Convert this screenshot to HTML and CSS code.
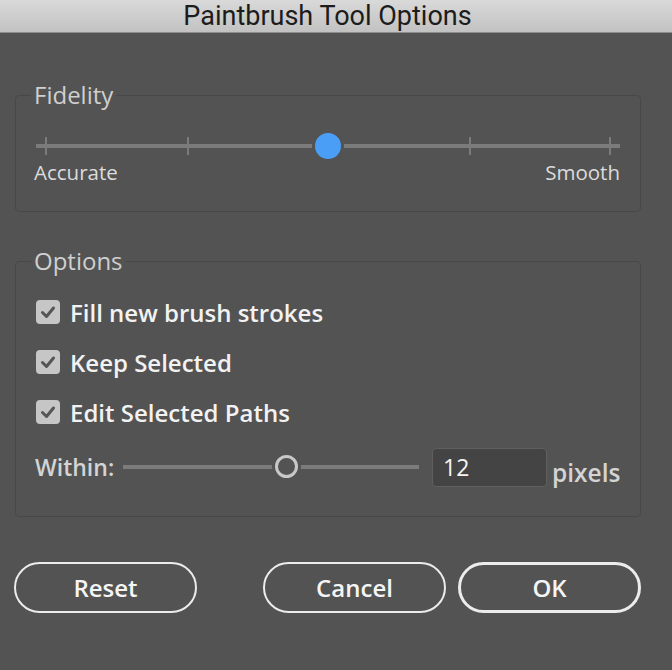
FILE: index.html
```html
<!DOCTYPE html>
<html>
<head>
<meta charset="utf-8">
<link rel="stylesheet" href="styles.css">
</head>
<body>
<div class="dialog">
  <div class="titlebar">Paintbrush Tool Options</div>
  <div class="content">
    <fieldset class="group fidelity">
      <legend>Fidelity</legend>
      <div class="fslider">
        <div class="track"></div>
        <span class="tick t0"></span>
        <span class="tick t1"></span>
        <span class="tick t2"></span>
        <span class="tick t3"></span>
        <span class="tick t4"></span>
        <span class="thumb-blue"></span>
      </div>
      <div class="fl-labels"><span>Accurate</span><span>Smooth</span></div>
    </fieldset>

    <fieldset class="group options">
      <legend>Options</legend>
      <label class="row"><span class="check"><svg viewBox="0 0 24 24" width="24" height="24"><path d="M6.5 12.5 L10.5 16.5 L17.5 8" fill="none" stroke="#555" stroke-width="3" stroke-linecap="round" stroke-linejoin="round"/></svg></span>Fill new brush strokes</label>
      <label class="row"><span class="check"><svg viewBox="0 0 24 24" width="24" height="24"><path d="M6.5 12.5 L10.5 16.5 L17.5 8" fill="none" stroke="#555" stroke-width="3" stroke-linecap="round" stroke-linejoin="round"/></svg></span>Keep Selected</label>
      <label class="row"><span class="check"><svg viewBox="0 0 24 24" width="24" height="24"><path d="M6.5 12.5 L10.5 16.5 L17.5 8" fill="none" stroke="#555" stroke-width="3" stroke-linecap="round" stroke-linejoin="round"/></svg></span>Edit Selected Paths</label>
      <div class="within">
        <span class="within-label">Within:</span>
        <div class="wslider">
          <div class="wtrack"></div>
          <span class="thumb-ring"></span>
        </div>
        <div class="numbox">12</div>
        <span class="unit">pixels</span>
      </div>
    </fieldset>

    <div class="buttons">
      <button class="btn reset">Reset</button>
      <div class="right">
        <button class="btn">Cancel</button>
        <button class="btn ok">OK</button>
      </div>
    </div>
  </div>
</div>
</body>
</html>
```
FILE: styles.css
```css
html, body {
  margin: 0;
  padding: 0;
  background: #535353;
}
body {
  width: 672px;
  height: 670px;
  overflow: hidden;
  font-family: "Open Sans", "Noto Sans", sans-serif;
}
.titlebar {
  height: 33px;
  box-sizing: border-box;
  background: linear-gradient(#d9d9d9, #c2c2c2);
  border-bottom: 1px solid #8e8e8e;
  text-align: center;
  padding-right: 17px;
  font-family: "Roboto", "Liberation Sans", sans-serif;
  font-size: 27px;
  line-height: 32px;
  color: #1c1c1c;
}
.content {
  padding: 49px 31px 0 15px;
}
.group {
  margin: 0;
  border: 1px solid #484848;
  border-radius: 4px;
  padding: 0 20px;
}
.group legend {
  font-size: 24px;
  font-weight: 500;
  line-height: 26px;
  color: #cfcfcf;
  padding: 0 3px;
  margin-left: -5px;
}
.fidelity {
  padding-top: 26px;
  padding-bottom: 27px;
}
.fslider {
  position: relative;
  height: 24px;
}
.track {
  position: absolute;
  left: 0;
  right: 0;
  top: 10px;
  height: 4px;
  background: #7b7b7b;
}
.tick {
  position: absolute;
  top: 3px;
  width: 2px;
  height: 18px;
  background: #7b7b7b;
}
.t0 { left: 9px; }
.t1 { left: 151px; }
.t2 { left: 292px; }
.t3 { left: 433px; }
.t4 { left: 573px; }
.thumb-blue {
  position: absolute;
  left: 279px;
  top: -1px;
  width: 26px;
  height: 26px;
  border-radius: 50%;
  background: #4a9ef6;
  box-shadow: 0 0 0 3px #535353;
}
.fl-labels {
  display: flex;
  justify-content: space-between;
  margin-top: 2px;
  font-size: 20.5px;
  font-weight: 500;
  line-height: 24px;
  color: #dcdcdc;
  margin-left: -2px;
}
.options {
  margin-top: 36px;
  padding-top: 13px;
  padding-bottom: 24px;
}
.row {
  display: flex;
  align-items: center;
  height: 50px;
  font-size: 24px;
  font-weight: 600;
  color: #f2f2f2;
}
.check {
  width: 24px;
  height: 24px;
  border-radius: 4px;
  background: #c6c6c6;
  margin-right: 10px;
  display: flex;
}
.within {
  display: flex;
  align-items: center;
  height: 50px;
  margin-top: 5px;
}
.within-label {
  font-size: 23px;
  font-weight: 600;
  color: #d4d4d4;
  width: 88px;
  margin-left: -1px;
}
.wslider {
  position: relative;
  width: 296px;
  height: 26px;
}
.wtrack {
  position: absolute;
  left: 0;
  right: 0;
  top: 11px;
  height: 4px;
  background: #7b7b7b;
}
.thumb-ring {
  position: absolute;
  left: 152px;
  top: 1px;
  width: 17px;
  height: 17px;
  border: 3.5px solid #c8c8c8;
  border-radius: 50%;
  background: #535353;
  box-shadow: 0 0 0 3px #535353;
}
.numbox {
  margin-left: 13px;
  width: 115px;
  height: 39px;
  box-sizing: border-box;
  background: #444444;
  border: 1px solid #5f5f5f;
  border-radius: 4px;
  color: #f5f5f5;
  font-size: 23px;
  line-height: 37px;
  padding-left: 10px;
}
.unit {
  margin-left: 5px;
  margin-top: 10px;
  font-size: 24.5px;
  font-weight: 600;
  color: #d4d4d4;
}
.buttons {
  display: flex;
  justify-content: space-between;
  margin-top: 45px;
  margin-left: -1px;
}
.right {
  display: flex;
  gap: 12px;
}
.btn {
  width: 183px;
  height: 51px;
  box-sizing: border-box;
  border: 2px solid #ececec;
  border-radius: 26px;
  background: transparent;
  color: #f5f5f5;
  font-family: "Open Sans", "Noto Sans", sans-serif;
  font-size: 24px;
  font-weight: 600;
  padding: 0;
}
.ok {
  border-width: 3px;
}
```
